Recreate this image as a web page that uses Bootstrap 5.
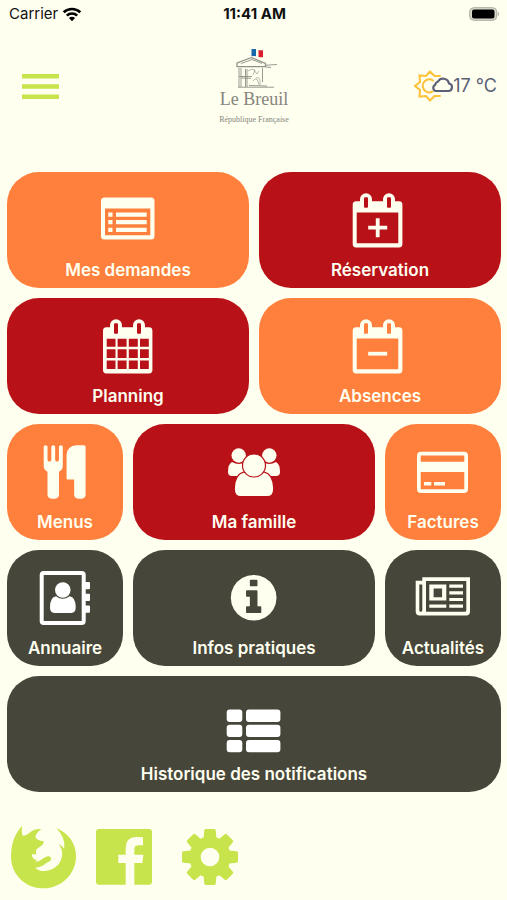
<!DOCTYPE html>
<html lang="fr">
<head>
<meta charset="utf-8">
<meta name="viewport" content="width=device-width, initial-scale=1">
<title>Le Breuil</title>
<link href="https://cdn.jsdelivr.net/npm/bootstrap@5.3.0/dist/css/bootstrap.min.css" rel="stylesheet">
<style>
  body { background: #fffff0; font-family: Inter, "Liberation Sans", sans-serif; color: #111; }
  .screen { padding: 0 6px 0 7px; }
  .status { height: 28px; font-size: 15px; line-height: 28px; padding: 0 1px 0 2px; }
  .status-time { font-weight: 700; }
  .top { height: 144px; }
  .top-side { flex: 1 1 0; height: 116px; }
  .menu-btn { margin-left: 15px; }
  .icon-btn { border: 0; background: none; padding: 0; color: #c8e44c; line-height: 0; }
  .town { color: #85857d; font-family: "Liberation Serif", serif; text-align: center; padding-top: 20px; }
  .town-name { font-size: 18px; line-height: 18px; }
  .town-sub { font-size: 8px; line-height: 10px; margin-top: 7px; }
  .weather { color: #5b6076; font-size: 18px; line-height: 24px; }
  .tiles { --bs-gutter-x: 10px; --bs-gutter-y: 10px; }
  .tile { display: flex; flex-direction: column; align-items: center; gap: 6px; padding: 16px 0 6px;
          border-radius: 32px; color: #fffff0; text-decoration: none; font-size: 17px; font-weight: 600;
          line-height: 24px; white-space: nowrap; }
  .tile:hover { color: #fffff0; }
  .t-orange { background: #ff803d; --tile: #ff803d; }
  .t-red { background: #b81118; --tile: #b81118; }
  .t-dark { background: #46463a; --tile: #46463a; }
  .links { padding: 31px 0 0 2px; gap: 19px; }
  .settings-btn { margin-left: 11px; }
</style>
</head>
<body>
<div class="screen">
  <div class="status d-flex align-items-center">
    <div class="col d-flex align-items-center">
      <span>Carrier</span>
      <svg class="ms-1" width="20" height="15" viewBox="0 0 20 15" fill="none" stroke="#000" stroke-width="2.6"><path d="M1.7 5.3a12 12 0 0 1 16.6 0M4.8 8.6a7.6 7.6 0 0 1 10.4 0"/><path d="M10 14.3 6.9 11.1a4.6 4.6 0 0 1 6.2 0z" fill="#000" stroke="none"/></svg>
    </div>
    <div class="status-time">11:41 AM</div>
    <div class="col d-flex justify-content-end">
      <svg width="31" height="14" viewBox="0 0 31 14"><rect x=".7" y=".7" width="27" height="12.6" rx="4" fill="#d9d9cc" stroke="#a9a99f"/><rect x="3" y="2.6" width="22.5" height="8.8" rx="2" fill="#000"/><path d="M28.8 4.4q2.6 2.6 0 5.2z" fill="#a9a99f"/></svg>
    </div>
  </div>

  <header class="top d-flex align-items-start">
    <div class="top-side d-flex align-items-center">
      <button class="icon-btn menu-btn" type="button" aria-label="Menu">
        <svg width="37" height="25" viewBox="0 0 37 25" fill="currentColor"><path d="M0 0h37v4.4H0zM0 10.3h37v4.4H0zM0 20.6h37V25H0z"/></svg>
      </button>
    </div>
    <div class="town">
      <svg class="d-block mx-auto" width="54" height="42" viewBox="-2 0 54 42" fill="none" stroke="#8f8f86" stroke-width=".9">
        <path d="M22.500 1h4.500v7.300q-2-.6-4.500 0z" fill="#1668a8" stroke="none"/><path d="M29.500 2q2 .6 4.500.2v7q-2 .4-4.500-.3z" fill="#d9202c" stroke="none"/>
        <path stroke-width="1.200" d="M22.500 9.500 8 15v4M22.500 9.500l14 6v3.500M8 18.700h29"/>
        <path d="M12 15.500l11-4 10 4M36 17.300l12-.8M37 19l5 .5"/>
        <path d="M10 20v19M12 20v19M16.500 21v18M18 21v18M33.500 20v14M10 28.500h13M12 30l10 .3M9 39.200h36M20 37.500l18 .5"/>
        <path opacity=".7" d="M19 23q4-3 7-1l-2 5M25 22l3 4 2-3M24 33q4-6 6 4M27 30q5-2 4 7"/>
      </svg>
      <div class="town-name">Le Breuil</div>
      <div class="town-sub">République Française</div>
    </div>
    <div class="top-side weather d-flex align-items-center justify-content-end">
      <svg width="40" height="34" viewBox="0 0 40 34" fill="none" stroke-width="2.100" stroke-linejoin="miter" stroke-linecap="round">
        <path stroke="#fdc23a" d="M27 7 21.500 7 17 2.500 13 7 6.500 6.500 7 13 2 17l5 4-.5 6.500 6.500-.5 4 4.500 4.500-4.500h5.500M20 11.500a6.500 6.500 0 1 0-.5 11"/>
        <path stroke="#5b6076" stroke-width="2.200" d="M25.500 22h10a3.800 3.800 0 0 0 .5-7.500 6 6 0 0 0-11-2 4.600 4.600 0 0 0-3 3.500 3.200 3.200 0 0 0 1 6z"/>
      </svg>
      <span class="me-1">17 °C</span>
    </div>
  </header>

  <main class="row tiles">
    <div class="col-6"><a class="tile t-orange" href="#">
      <svg width="64" height="64" viewBox="0 0 64 64" fill="currentColor"><path fill-rule="evenodd" d="M8.500 9.500H55a3.500 3.500 0 0 1 3.500 3.500v35a3.500 3.500 0 0 1-3.500 3.500H8.500A3.500 3.500 0 0 1 5 48V13a3.500 3.500 0 0 1 3.500-3.500zM9 20.500v26.800h45.300V20.500z"/><path d="M12.300 24.500h4.200v4.200h-4.200zM12.300 32.100h4.200v4.200h-4.200zM12.300 39.700h4.200v4.200h-4.200zM20 24.500h30.700v4.200H20zM20 32.100h30.700v4.200H20zM20 39.700h30.700v4.200H20z"/></svg>
      <span>Mes demandes</span></a></div>
    <div class="col-6"><a class="tile t-red" href="#">
      <svg width="64" height="64" viewBox="0 0 64 64" fill="currentColor"><path fill-rule="evenodd" d="M8 13.300h4v-2a6 6 0 0 1 12 0v2h11v-2a6 6 0 0 1 12 0v2h4a3.400 3.400 0 0 1 3.400 3.400V56a3.400 3.400 0 0 1-3.400 3.400H8A3.400 3.400 0 0 1 4.700 56V16.700A3.400 3.400 0 0 1 8 13.300zM8.700 24.500V55.300h41.600V24.500z"/><g fill="var(--tile)"><rect x="16" y="9.300" width="4" height="10.400" rx="1"/><rect x="39" y="9.300" width="4" height="10.400" rx="1"/></g><path d="M27.800 30.200h3.800v7.600h7.600v3.800h-7.600v7.600h-3.800v-7.600h-7.600v-3.800h7.600z"/></svg>
      <span>Réservation</span></a></div>
    <div class="col-6"><a class="tile t-red" href="#">
      <svg width="64" height="64" viewBox="0 0 64 64" fill="currentColor"><path d="M10.300 13.300h3.700v-2a6 6 0 0 1 12 0v2h11v-2a6 6 0 0 1 12 0v2h4a3.400 3.400 0 0 1 3.400 3.400V56a3.400 3.400 0 0 1-3.400 3.400H10.300A3.400 3.400 0 0 1 7 56V16.700a3.400 3.400 0 0 1 3.300-3.400z"/><g fill="var(--tile)"><rect x="18" y="9.300" width="4" height="10.400" rx="1"/><rect x="41" y="9.300" width="4" height="10.400" rx="1"/><path d="M10.700 24.700h8.800v8h-8.800zM21.600 24.700h9v8h-9zM32.800 24.700h9v8h-9zM44 24.700h8.800v8H44zM10.700 35.200h8.800v8.800h-8.800zM21.600 35.200h9v8.800h-9zM32.800 35.200h9v8.800h-9zM44 35.200h8.800v8.800H44zM10.700 46.500h8.800v8.500h-8.800zM21.600 46.500h9v8.500h-9zM32.800 46.500h9v8.500h-9zM44 46.500h8.800v8.500H44z"/></g></svg>
      <span>Planning</span></a></div>
    <div class="col-6"><a class="tile t-orange" href="#">
      <svg width="64" height="64" viewBox="0 0 64 64" fill="currentColor"><path fill-rule="evenodd" d="M8 13.300h4v-2a6 6 0 0 1 12 0v2h11v-2a6 6 0 0 1 12 0v2h4a3.400 3.400 0 0 1 3.400 3.400V56a3.400 3.400 0 0 1-3.400 3.400H8A3.400 3.400 0 0 1 4.700 56V16.700A3.400 3.400 0 0 1 8 13.300zM8.700 24.500V55.300h41.600V24.500z"/><g fill="var(--tile)"><rect x="16" y="9.300" width="4" height="10.400" rx="1"/><rect x="39" y="9.300" width="4" height="10.400" rx="1"/></g><path d="M20.200 37.800h19v3.800h-19z"/></svg>
      <span>Absences</span></a></div>

    <div class="col-3"><a class="tile t-orange" href="#">
      <svg width="64" height="64" viewBox="0 0 64 64" fill="currentColor"><path transform="translate(5 5.300) scale(.02976)" d="M832 64v640q0 61-35.500 111t-92.500 70v779q0 52-38 90t-90 38h-128q-52 0-90-38t-38-90v-779q-57-20-92.500-70t-35.500-111v-640q0-26 19-45t45-19 45 19 19 45v416q0 26 19 45t45 19 45-19 19-45v-416q0-26 19-45t45-19 45 19 19 45v416q0 26 19 45t45 19 45-19 19-45v-416q0-26 19-45t45-19 45 19 19 45zm768 0v1600q0 52-38 90t-90 38h-128q-52 0-90-38t-38-90v-512h-224q-13 0-22.500-9.500t-9.500-22.500v-800q0-132 94-226t226-94h256q26 0 45 19t19 45z"/></svg>
      <span>Menus</span></a></div>
    <div class="col-6"><a class="tile t-red" href="#">
      <svg width="64" height="64" viewBox="0 0 64 64" fill="currentColor"><path d="M10 22q7 4 13 0v14H10q-4 0-4-4 0-8 4-10zM54 22q-7 4-13 0v14h13q4 0 4-4 0-8-4-10z"/><circle cx="16.700" cy="15.500" r="7.200"/><circle cx="47.300" cy="15.500" r="7.200"/><g stroke="var(--tile)" stroke-width="1.200"><path d="M22 32q10 7 20 0 9 2 9.700 16 .3 8.700-6.700 8.700H19q-7 0-6.700-8.700Q13 34 22 32z"/><circle cx="32" cy="25.500" r="11.500"/></g></svg>
      <span>Ma famille</span></a></div>
    <div class="col-3"><a class="tile t-orange" href="#">
      <svg width="64" height="64" viewBox="0 0 64 64" fill="currentColor"><path fill-rule="evenodd" d="M10 11.700h43a4 4 0 0 1 4 4V49a4 4 0 0 1-4 4H10a4 4 0 0 1-4-4V15.700a4 4 0 0 1 4-4zM9.700 15.500v6.200h43.600v-6.200zM9.700 32v17.300h43.600V32z"/><path d="M13 42h7.300v3.600H13zM23 42h11v3.600H23z"/></svg>
      <span>Factures</span></a></div>

    <div class="col-3"><a class="tile t-dark" href="#">
      <svg width="64" height="64" viewBox="0 0 64 64" fill="#fff"><rect x="8.700" y="7" width="42" height="50" rx="2" fill="none" stroke="#fff" stroke-width="4"/><path d="M52 16h4q1 0 1 1v5.300q0 1-1 1h-4zM52 27.700h4q1 0 1 1V34q0 1-1 1h-4zM52 39.500h4q1 0 1 1v5.300q0 1-1 1h-4z"/><circle cx="29.800" cy="24" r="7.800"/><path d="M23 30.300q6.800 5 13.600 0 6 .7 6.100 11 0 5.700-4.500 5.700H21.500q-4.500 0-4.500-5.700.1-10.300 6-11z"/></svg>
      <span>Annuaire</span></a></div>
    <div class="col-6"><a class="tile t-dark" href="#">
      <svg width="64" height="64" viewBox="0 0 64 64" fill="currentColor"><path transform="translate(5 5.100) scale(.02976)" d="M1152 1376v-160q0-14-9-23t-23-9h-96v-512q0-14-9-23t-23-9h-320q-14 0-23 9t-9 23v160q0 14 9 23t23 9h96v320h-96q-14 0-23 9t-9 23v160q0 14 9 23t23 9h448q14 0 23-9t9-23zm-128-896v-160q0-14-9-23t-23-9h-192q-14 0-23 9t-9 23v160q0 14 9 23t23 9h192q14 0 23-9t9-23zm640 416q0 209-103 385.500t-279.500 279.500-385.500 103-385.500-103-279.500-279.500-103-385.500 103-385.500 279.500-279.500 385.500-103 385.500 103 279.500 279.500 103 385.500z"/></svg>
      <span>Infos pratiques</span></a></div>
    <div class="col-3"><a class="tile t-dark" href="#">
      <svg width="64" height="64" viewBox="0 0 64 64" fill="currentColor"><path fill-rule="evenodd" d="M11.300 11.300H59V45.500q0 4-4 4H8.700q-4 0-4-4V14.700h6.600zM8.300 18.500v26q0 1.300 1.500 1.300t1.500-1.300v-26zM15 15v30.700h39q1.300 0 1.300-1.300V15z"/><path fill-rule="evenodd" d="M18.300 18.600h17v16h-17zM22.600 22.500v8.700h8.500v-8.700z"/><path d="M38.300 18.600H52v3.200H38.300zM38.300 25.200H52v3.200H38.300zM38.300 31.900H52v3.200H38.300zM38.300 38.600H52v3.200H38.300zM18.300 38.600h17v3.200h-17z"/></svg>
      <span>Actualités</span></a></div>

    <div class="col-12"><a class="tile t-dark" href="#">
      <svg width="64" height="64" viewBox="0 0 64 64" fill="#fff"><rect x="4.700" y="17.500" width="15.600" height="12.400" rx="3"/><rect x="24" y="17.500" width="34.400" height="12.400" rx="3"/><rect x="4.700" y="32.700" width="15.600" height="12.400" rx="3"/><rect x="24" y="32.700" width="34.400" height="12.400" rx="3"/><rect x="4.700" y="47.900" width="15.600" height="12.400" rx="3"/><rect x="24" y="47.900" width="34.400" height="12.400" rx="3"/></svg>
      <span>Historique des notifications</span></a></div>
  </main>

  <footer class="links d-flex align-items-center">
    <a class="icon-btn" href="#" aria-label="Site web"><svg width="68" height="68" viewBox="27 26 204 204" fill="currentColor"><path d="M67 34Q63 50 68 64Q77 66 90 54Q104 42 124 44Q110 53 106 68Q110 78 131 81Q132 90 122 96L111 103Q106 108 109 120Q101 121 95 118Q95 128 102 134L111 138Q105 142 108 142Q120 141 130 132Q142 123 151 127Q156 134 150 140L138 147Q126 159 106 160Q116 171 135 170Q160 168 176 150Q192 126 184 104Q181 96 176 88Q188 95 193 104Q197 70 169 42C205 55 228 88 228 125C228 180 184 222 130 222C76 222 33 180 33 127C33 85 48 52 67 34z"/></svg></a>
    <a class="icon-btn" href="#" aria-label="Facebook"><svg width="56" height="56" viewBox="288 42 168 168" fill="currentColor"><path d="M297 42h150q9 0 9 9v149q0 9-9 9h-44v-65h24l3-25h-27v-16q0-12 12-12h14V67q-10-1-21-1-31 1-31 33v20h-22v25h22v65h-80q-9 0-9-9V51q0-9 9-9z"/></svg></a>
    <button class="icon-btn settings-btn" type="button" aria-label="Réglages"><svg width="56" height="56" viewBox="-84 -84 168 168" fill="currentColor"><defs><path id="tooth" d="M-20-50-17-80q1-4 4-4h26q3 0 4 4l3 30z"/></defs><path fill-rule="evenodd" d="M0-62a62 62 0 1 0 0 124A62 62 0 1 0 0-62zM0-28a28 28 0 1 1 0 56 28 28 0 1 1 0-56z"/><use href="#tooth"/><use href="#tooth" transform="rotate(45)"/><use href="#tooth" transform="rotate(90)"/><use href="#tooth" transform="rotate(135)"/><use href="#tooth" transform="rotate(180)"/><use href="#tooth" transform="rotate(225)"/><use href="#tooth" transform="rotate(270)"/><use href="#tooth" transform="rotate(315)"/></svg></button>
  </footer>
</div>
<script src="https://cdn.jsdelivr.net/npm/bootstrap@5.3.0/dist/js/bootstrap.bundle.min.js"></script>
</body>
</html>
